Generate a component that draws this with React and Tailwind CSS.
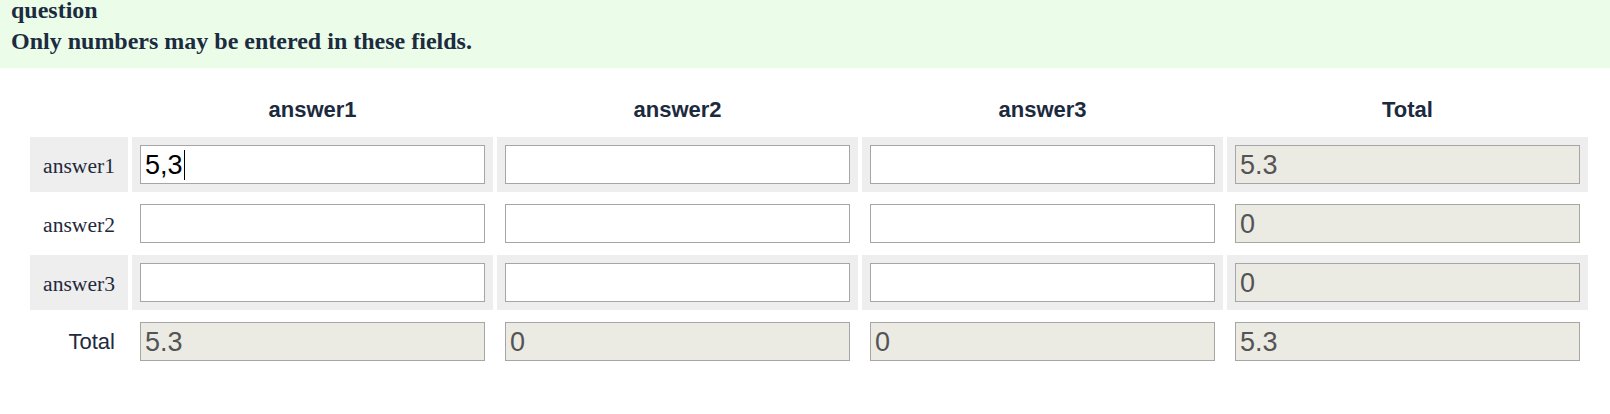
import React from "react";

const sans = "font-['Liberation_Sans',Arial,sans-serif]";
const serif = "font-['Liberation_Serif','Times_New_Roman',serif]";

function Field({ value = "", readOnly = false }) {
  return (
    <input
      type="text"
      readOnly={readOnly}
      defaultValue={value}
      className={`block w-full h-[39px] border border-[#a6a6a6] pl-[4px] pr-[2px] pt-[1px] text-[27px] outline-none ${sans} ${
        readOnly ? "bg-[#ebebe4] text-[#545454]" : "bg-white text-black"
      }`}
    />
  );
}

function FocusedField({ value }) {
  return (
    <div
      className={`flex items-center w-full h-[39px] border border-[#a6a6a6] bg-white pl-[4px] pr-[2px] pt-[1px] text-[27px] text-black ${sans}`}
    >
      <span>{value}</span>
      <span className="ml-[1px] w-px h-[30px] bg-black" />
    </div>
  );
}

function Cell({ shaded, children }) {
  return <div className={`h-[55px] p-[8px] ${shaded ? "bg-[#eeeeee]" : ""}`}>{children}</div>;
}

function RowLabel({ shaded, children, isSans }) {
  return (
    <div
      className={`h-[55px] flex items-center justify-end pr-[13px] text-[21.6px] text-[#1f2a3c] ${
        isSans ? sans : serif
      } ${shaded ? "bg-[#eeeeee]" : ""}`}
    >
      <span className={isSans ? "text-[22px]" : "pt-[3px]"}>{children}</span>
    </div>
  );
}

function Header({ children }) {
  return (
    <div
      className={`h-[48px] flex items-center justify-center text-[22px] font-bold text-[#1c2a3e] ${sans}`}
    >
      {children}
    </div>
  );
}

export default function App() {
  const rows = [
    { label: "answer1", shaded: true, total: "5.3" },
    { label: "answer2", shaded: false, total: "0" },
    { label: "answer3", shaded: true, total: "0" },
  ];
  return (
    <div className="w-[1610px] h-[414px] bg-white overflow-hidden">
      <div className="h-[68px] bg-[#ebfde9] pl-[11px] overflow-hidden">
        <div className={`-mt-[5px] ${serif} font-bold text-[24px] leading-[31px] text-[#1c2b3f]`}>
          <div>question</div>
          <div>Only numbers may be entered in these fields.</div>
        </div>
      </div>
      <div className="pl-[30px] pt-[17px]">
        <div className="grid w-[1558px] grid-cols-[98px_repeat(4,361px)] gap-[4px]">
          <div />
          <Header>answer1</Header>
          <Header>answer2</Header>
          <Header>answer3</Header>
          <Header>Total</Header>
          {rows.map((r, i) => (
            <React.Fragment key={r.label}>
              <RowLabel shaded={r.shaded}>{r.label}</RowLabel>
              <Cell shaded={r.shaded}>{i === 0 ? <FocusedField value="5,3" /> : <Field />}</Cell>
              <Cell shaded={r.shaded}>
                <Field />
              </Cell>
              <Cell shaded={r.shaded}>
                <Field />
              </Cell>
              <Cell shaded={r.shaded}>
                <Field value={r.total} readOnly />
              </Cell>
            </React.Fragment>
          ))}
          <RowLabel isSans>Total</RowLabel>
          <Cell>
            <Field value="5.3" readOnly />
          </Cell>
          <Cell>
            <Field value="0" readOnly />
          </Cell>
          <Cell>
            <Field value="0" readOnly />
          </Cell>
          <Cell>
            <Field value="5.3" readOnly />
          </Cell>
        </div>
      </div>
    </div>
  );
}
